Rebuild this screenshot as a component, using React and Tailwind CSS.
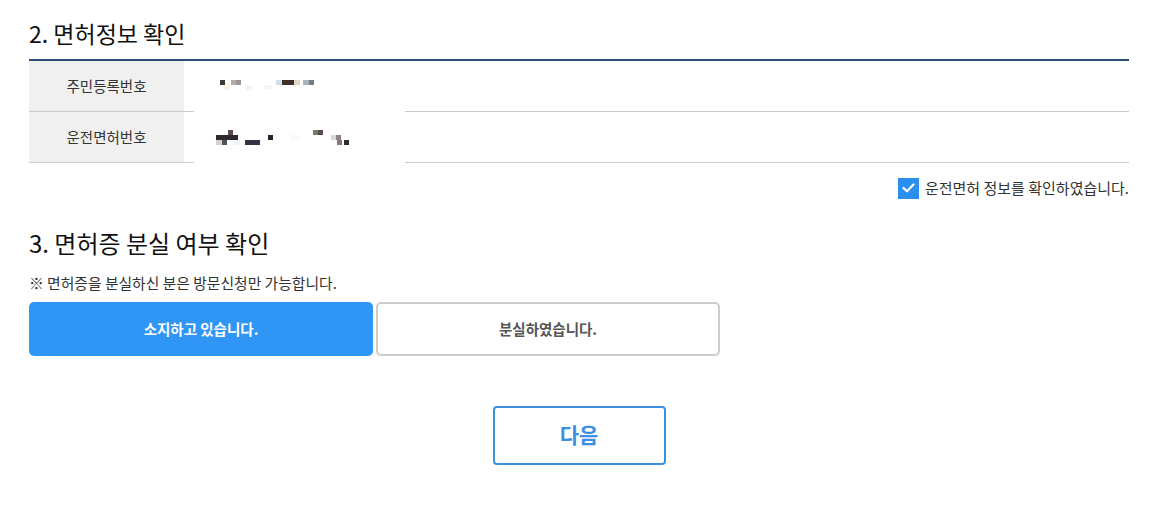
import React, { useState } from 'react';

const FONT = { fontFamily: '"Noto Sans CJK KR", "Noto Sans", sans-serif' };

// 가려진(모자이크) 값 - 픽셀 블록
const MASK_1 = [
  [26, 19, 5, 5, '#3a3a3a'], [37, 19, 5, 5, '#b3acaa'], [42, 19, 5, 5, '#9b9395'],
  [30, 24, 6, 5, '#fbf3e6'], [52, 24, 6, 5, '#eef7f3'], [82, 19, 6, 5, '#cfe1ea'],
  [88, 19, 12, 5, '#3d2f28'], [100, 19, 6, 5, '#ddd6c4'], [109, 19, 6, 5, '#a7b2bb'],
  [115, 19, 5, 5, '#737b8c'], [70, 24, 8, 5, '#f7f5f9'],
];
const MASK_2 = [
  [34, 69, 5, 5, '#5a4b52'], [22, 74, 22, 5, '#2f2a2c'], [74, 74, 5, 5, '#262424'],
  [22, 79, 6, 5, '#d9d1d1'], [28, 79, 5, 5, '#4f5560'], [51, 79, 15, 5, '#323446'],
  [119, 69, 5, 5, '#77796f'], [124, 69, 5, 5, '#5b4a48'], [137, 74, 5, 5, '#d8d8dc'],
  [142, 74, 5, 5, '#8c8388'], [143, 79, 5, 5, '#86787c'], [150, 79, 5, 5, '#2d2b34'],
  [40, 79, 6, 5, '#f3f3f6'], [96, 74, 10, 5, '#f6fbfa'],
];

function InfoRow({ label }) {
  return (
    <div className="flex h-[51px] border-b border-[#cccccc]">
      <div className="flex w-[155px] items-center justify-center bg-[#f0f0f0] text-[14.5px] text-[#333]">
        {label}
      </div>
      <div className="flex-1" />
    </div>
  );
}

export default function App() {
  const [lost, setLost] = useState(false);
  const [checked, setChecked] = useState(true);

  return (
    <div className="min-h-[512px] bg-white px-[29px] pt-[18px] text-[#222]" style={FONT}>
      <div className="w-[1100px]">
        <h2 className="mb-[11px] text-[23px] leading-[30px] text-[#111]">2. 면허정보 확인</h2>

        <div className="relative border-t-2 border-[#2b4f75]">
          <InfoRow label="주민등록번호" />
          <InfoRow label="운전면허번호" />
          {/* 개인정보 가림 처리 */}
          <div className="absolute left-[165px] top-0 h-[103px] w-[211px] bg-white">
            <svg width="211" height="103" viewBox="0 0 211 103">
              {[...MASK_1, ...MASK_2].map(([x, y, w, h, c], i) => (
                <rect key={i} x={x} y={y} width={w} height={h} fill={c} />
              ))}
            </svg>
          </div>
        </div>

        <label className="mt-[14px] flex cursor-pointer items-center justify-end gap-[6px]">
          <span
            onClick={() => setChecked(!checked)}
            className={`flex h-[21px] w-[21px] items-center justify-center ${checked ? 'bg-[#2b8ff0]' : 'border border-[#aaa] bg-white'}`}
          >
            {checked && (
              <svg width="13" height="10" viewBox="0 0 13 10" fill="none">
                <path d="M1.5 5 L5 8.3 L11.5 1.5" stroke="white" strokeWidth="2.2" strokeLinecap="round" strokeLinejoin="round" />
              </svg>
            )}
          </span>
          <span className="text-[15px] text-[#333]">운전면허 정보를 확인하였습니다.</span>
        </label>

        <h2 className="mt-[28px] text-[24px] leading-[30px] text-[#111]">3. 면허증 분실 여부 확인</h2>
        <p className="mt-[15px] text-[14.8px] leading-[20px] text-[#333]">※ 면허증을 분실하신 분은 방문신청만 가능합니다.</p>

        <div className="mt-[9px] flex gap-[3px]">
          <button
            onClick={() => setLost(false)}
            className={`h-[54px] w-[344px] rounded-[5px] text-[14.5px] font-bold ${!lost ? 'bg-[#2f96f5] text-white' : 'border-2 border-[#cccccc] bg-white text-[#555]'}`}
          >
            소지하고 있습니다.
          </button>
          <button
            onClick={() => setLost(true)}
            className={`h-[54px] w-[344px] rounded-[5px] text-[14.5px] font-bold ${lost ? 'bg-[#2f96f5] text-white' : 'border-2 border-[#cccccc] bg-white text-[#555]'}`}
          >
            분실하였습니다.
          </button>
        </div>

        <div className="mt-[50px] flex justify-center">
          <button className="h-[59px] w-[173px] rounded-[4px] border-2 border-[#3b8fe0] bg-white text-[21px] font-bold text-[#3b8fe0]">
            다음
          </button>
        </div>
      </div>
    </div>
  );
}
